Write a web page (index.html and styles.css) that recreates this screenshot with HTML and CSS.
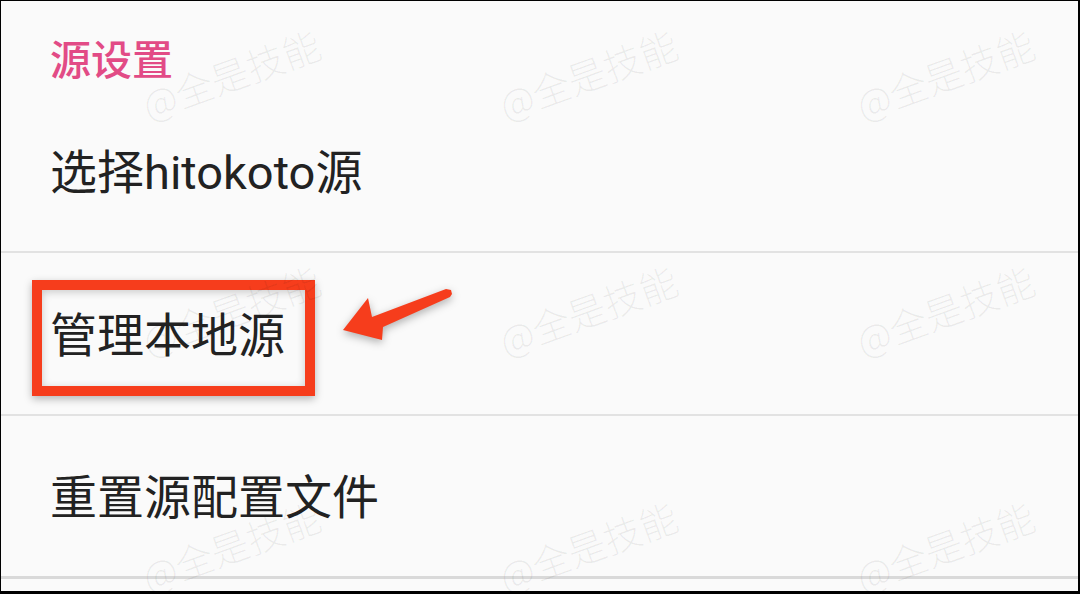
FILE: index.html
```html
<!DOCTYPE html>
<html lang="zh-CN">
<head>
<meta charset="utf-8">
<title>源设置</title>
<link rel="stylesheet" href="styles.css">
</head>
<body>
<div class="screen">
  <div class="header"><span class="title">源设置</span></div>
  <div class="item"><span class="label">选择hitokoto源</span></div>
  <div class="item"><span class="label">管理本地源</span></div>
  <div class="item item-last"><span class="label">重置源配置文件</span></div>

  <div class="highlight"></div>
  <svg class="arrow" viewBox="336 284 124 62" width="124" height="62">
    <polygon points="343,330 368,298 372,317 446,289 451,290 452,294 450,297 383,327 382,340" fill="#f63d1c"/>
  </svg>

  <div class="watermarks">
    <span class="wm">@全是技能</span><span class="wm">@全是技能</span><span class="wm">@全是技能</span>
    <span class="wm">@全是技能</span><span class="wm">@全是技能</span><span class="wm">@全是技能</span>
    <span class="wm">@全是技能</span><span class="wm">@全是技能</span><span class="wm">@全是技能</span>
  </div>
</div>
</body>
</html>
```

FILE: styles.css
```css
html, body {
  margin: 0;
  padding: 0;
  background: #000;
}
.screen {
  position: relative;
  box-sizing: border-box;
  width: 1080px;
  height: 594px;
  border-style: solid;
  border-color: #000;
  border-width: 1px 2px 3px 1px;
  background: #fafafa;
  overflow: hidden;
  font-family: Roboto, "Noto Sans CJK SC", sans-serif;
}
.header {
  box-sizing: border-box;
  height: 89px;
  padding: 37px 0 0 49px;
}
.title {
  display: block;
  font-size: 41px;
  line-height: 46px;
  font-weight: 500;
  color: #e24b86;
}
.item {
  box-sizing: border-box;
  height: 163px;
  padding: 4px 0 0 49px;
  display: flex;
  align-items: center;
  border-bottom: 2px solid #e2e2e2;
}
.item-last {
  border-bottom: 3px solid #d9d9d9;
}
.label {
  font-size: 47px;
  line-height: 54px;
  color: #222;
}
.highlight {
  position: absolute;
  left: 31px;
  top: 279px;
  width: 283px;
  height: 116px;
  box-sizing: border-box;
  border: 10px solid #f63d1c;
  box-shadow: 0 3px 8px rgba(0,0,0,0.28), inset 0 2px 8px rgba(0,0,0,0.2);
}
.arrow {
  position: absolute;
  left: 335px;
  top: 283px;
  filter: drop-shadow(0 3px 4px rgba(0,0,0,0.3));
}
.watermarks {
  position: absolute;
  left: 51px;
  top: -46px;
  display: grid;
  grid-template-columns: repeat(3, 357px);
  grid-template-rows: repeat(3, 236px);
  pointer-events: none;
}
.wm {
  display: flex;
  align-items: center;
  justify-content: center;
  font-family: "Noto Sans CJK SC", sans-serif;
  font-weight: 300;
  font-size: 38px;
  color: rgba(0,0,0,0.06);
  transform: rotate(-20deg);
  white-space: nowrap;
}
```
